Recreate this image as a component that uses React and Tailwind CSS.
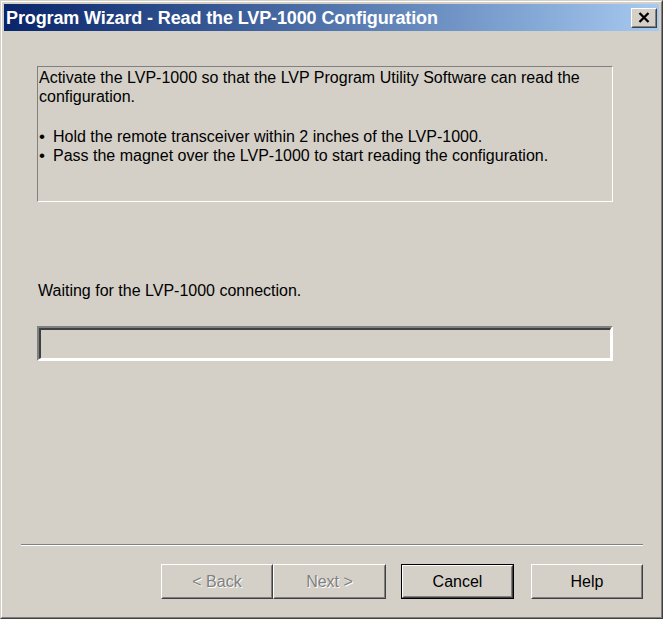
import React from 'react';

const font = { fontFamily: '"Liberation Sans", Arial, sans-serif' };

const Button = ({ children, disabled, isDefault, className = '' }) => {
    const face = (
        <div className="h-full w-full border border-t-white border-l-white border-r-[#404040] border-b-[#404040]">
            <div className="h-full w-full border border-t-[#d4d0c8] border-l-[#d4d0c8] border-r-[#808080] border-b-[#808080] flex items-center justify-center">
                {disabled ? (
                    <span className="text-[#808080] [text-shadow:1px_1px_0_#ffffff]">{children}</span>
                ) : (
                    <span className="text-black">{children}</span>
                )}
            </div>
        </div>
    );
    return (
        <div className={`h-[35px] text-[16px] ${className}`}>
            {isDefault ? <div className="h-full w-full border border-black">{face}</div> : face}
        </div>
    );
};

const App = () => {
    return (
        <div className="w-[663px] h-[619px] bg-[#d4d0c8] border border-t-[#d4d0c8] border-l-[#d4d0c8] border-r-[#404040] border-b-[#404040]" style={font}>
            <div className="h-full border border-t-white border-l-white border-r-[#808080] border-b-[#808080] p-[2px] flex flex-col">
                {/* title bar */}
                <div className="h-[27px] shrink-0 flex items-center justify-between bg-gradient-to-r from-[#0a246a] to-[#a6caf0] pl-[2px] pr-[2px]">
                    <span className="text-white font-bold text-[18px] leading-none tracking-[-0.12px]">
                        Program Wizard - Read the LVP-1000 Configuration
                    </span>
                    <div className="w-[26px] h-[20px] bg-[#d4d0c8] border border-t-white border-l-white border-r-[#404040] border-b-[#404040]">
                        <div className="h-full w-full border border-t-[#d4d0c8] border-l-[#d4d0c8] border-r-[#808080] border-b-[#808080] flex items-center justify-center">
                            <svg width="12" height="11" viewBox="0 0 12 11">
                                <path d="M1.5 1 L10.5 10 M10.5 1 L1.5 10" stroke="#000" strokeWidth="2.3" />
                            </svg>
                        </div>
                    </div>
                </div>

                {/* instructions box */}
                <div className="ml-[33px] mt-[35px] w-[576px] h-[136px] shrink-0 border border-t-[#808080] border-l-[#808080] border-r-white border-b-white pl-[1px] pt-[1px] text-[16px] leading-[19px] text-black">
                    <p>Activate the LVP-1000 so that the LVP Program Utility Software can read the configuration.</p>
                    <div className="mt-[21px]">
                        <p><span className="inline-block w-[14px] text-[17px]">•</span>Hold the remote transceiver within 2 inches of the LVP-1000.</p>
                        <p><span className="inline-block w-[14px] text-[17px]">•</span>Pass the magnet over the LVP-1000 to start reading the configuration.</p>
                    </div>
                </div>

                <p className="ml-[34px] mt-[79px] text-[16px] leading-[19px] text-black">Waiting for the LVP-1000 connection.</p>

                {/* progress bar */}
                <div className="ml-[33px] mt-[26px] w-[576px] h-[35px] shrink-0 border-2 border-t-[#808080] border-l-[#808080] border-r-white border-b-white">
                    <div className="h-full w-full border-t-2 border-l-2 border-r border-b border-t-[#404040] border-l-[#404040] border-r-white border-b-white"></div>
                </div>

                {/* separator */}
                <div className="ml-[17px] mt-[183px] w-[622px] shrink-0 border-t border-b border-t-[#808080] border-b-white"></div>

                {/* buttons */}
                <div className="mt-[18px] mr-[16px] flex justify-end">
                    <Button disabled className="w-[112px]">&lt; Back</Button>
                    <Button disabled className="w-[113px]">Next &gt;</Button>
                    <Button isDefault className="w-[113px] ml-[15px]">Cancel</Button>
                    <Button className="w-[112px] ml-[17px]">Help</Button>
                </div>
            </div>
        </div>
    );
};

export default App;
